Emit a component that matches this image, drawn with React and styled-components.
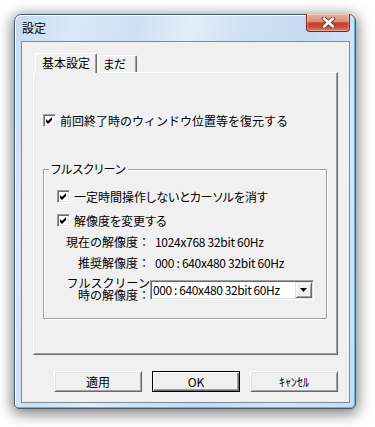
import styled, { createGlobalStyle } from "styled-components";

const GlobalStyle = createGlobalStyle`
  html, body {
    margin: 0;
    padding: 0;
    background: #fff;
  }
  body {
    font-family: "Noto Sans CJK JP", "MS UI Gothic", sans-serif;
    font-size: 12px;
    font-feature-settings: "palt";
    color: #000;
  }
`;

const Page = styled.div`
  width: 375px;
  height: 427px;
  box-sizing: border-box;
  padding: 14px 0 0 14px;
  overflow: hidden;
`;

const Window = styled.div`
  width: 342px;
  height: 395px;
  box-sizing: border-box;
  display: flex;
  flex-direction: column;
  border: 1px solid #4a5868;
  border-radius: 7px 7px 5px 5px;
  background: linear-gradient(105deg, #c6dbf0 0%, #d8e8f8 14%, #cde0f4 28%, #e2eefa 40%, #cfe1f4 52%, #c5daef 66%, #d7e6f6 82%, #c9ddf1 100%);
  box-shadow:
    inset 1px 1px 0 rgba(255, 255, 255, 0.85),
    inset -1px -1px 0 #5fb6ec,
    0 3px 14px 2px rgba(0, 0, 0, 0.5);
`;

const TitleBar = styled.div`
  height: 26px;
  flex: none;
  display: flex;
  justify-content: space-between;
  align-items: flex-start;
`;

const Title = styled.div`
  padding: 6px 0 0 7px;
  line-height: 14px;
  font-size: 12px;
`;

const CloseButton = styled.div`
  width: 44px;
  height: 18px;
  box-sizing: border-box;
  margin: -1px 5px 0 0;
  display: flex;
  align-items: center;
  justify-content: center;
  border: 1px solid #6e2a1e;
  border-top: none;
  border-radius: 0 0 4px 4px;
  background: linear-gradient(to bottom, #eab0a2 0%, #dc8c78 45%, #c2402a 52%, #c54a33 75%, #de8466 100%);
  box-shadow: inset 0 0 0 1px rgba(255, 255, 255, 0.35);
`;

const Client = styled.div`
  flex: 1;
  margin: 0 5px 5px 6px;
  border: 1px solid #7d8b99;
  background: #f0f0f0;
  display: flex;
  flex-direction: column;
  padding: 11px 11px 10px 11px;
`;

const TabStrip = styled.div`
  height: 19px;
  display: flex;
  align-items: flex-end;
  padding-left: 2px;
`;

const Tab = styled.div`
  position: relative;
  z-index: 1;
  box-sizing: border-box;
  width: ${(p) => (p.$active ? "62px" : "40px")};
  height: ${(p) => (p.$active ? "20px" : "17px")};
  margin-bottom: ${(p) => (p.$active ? "-1px" : "0")};
  padding-top: ${(p) => (p.$active ? "2px" : "1px")};
  padding-left: ${(p) => (p.$active ? "6px" : "5px")};
  line-height: 14px;
  background: #f0f0f0;
  border-top: 1px solid #fff;
  border-left: 1px solid #fff;
  border-right: 1px solid #696969;
  border-radius: 2px 2px 0 0;
  box-shadow: inset -1px 0 0 #a0a0a0;
`;

const Panel = styled.div`
  height: 283px;
  box-sizing: border-box;
  border: 1px solid;
  border-color: #fff #696969 #696969 #fff;
  box-shadow: inset -1px -1px 0 #a0a0a0;
  padding: 41px 10px 0 9px;
  display: flex;
  flex-direction: column;
`;

const CheckRow = styled.label`
  display: flex;
  align-items: center;
  gap: 4px;
  height: 13px;
  line-height: 13px;
  margin-top: ${(p) => p.$top || 0}px;
  margin-left: ${(p) => p.$indent || 0}px;
  font-feature-settings: ${(p) => (p.$wide ? "normal" : "\"palt\"")};
`;

const CheckBox = styled.span`
  width: 13px;
  height: 13px;
  box-sizing: border-box;
  flex: none;
  display: flex;
  align-items: center;
  justify-content: center;
  background: #fff;
  border: 1px solid;
  border-color: #a0a0a0 #fff #fff #a0a0a0;
  box-shadow: inset 1px 1px 0 #696969, inset -1px -1px 0 #e3e3e3;
`;

const GroupBox = styled.div`
  margin-top: 42px;
  border: 1px solid #a0a0a0;
  box-shadow: inset 1px 1px 0 #fff, 1px 1px 0 #fff;
  display: flex;
  flex-direction: column;
  padding-bottom: 18px;
`;

const GroupTitle = styled.div`
  align-self: flex-start;
  margin: -8px 0 0 5px;
  padding: 0 2px;
  line-height: 14px;
  background: #f0f0f0;
`;

const InfoGrid = styled.div`
  margin: 8px 0 0 16px;
  display: grid;
  grid-template-columns: 90px 1fr;
  grid-template-rows: 14px 14px 23px;
  row-gap: 7px;
  align-items: center;
`;

const InfoLabel = styled.div`
  text-align: right;
  line-height: ${(p) => (p.$tight ? "12px" : "14px")};
  white-space: nowrap;
  font-feature-settings: normal;
`;

const InfoValue = styled.div`
  padding-left: 5px;
  line-height: 14px;
  white-space: nowrap;
  letter-spacing: -0.3px;
`;

const Combo = styled.div`
  align-self: end;
  width: 164px;
  height: 20px;
  box-sizing: border-box;
  display: flex;
  align-items: center;
  background: #fff;
  border: 1px solid;
  border-color: #a0a0a0 #fff #fff #a0a0a0;
  box-shadow: inset 1px 1px 0 #696969, inset -1px -1px 0 #e3e3e3;
  padding: 1px 1px 1px 2px;
`;

const ComboText = styled.span`
  flex: 1;
  line-height: 14px;
  white-space: nowrap;
  letter-spacing: -0.4px;
`;

const ComboArrow = styled.span`
  width: 17px;
  height: 16px;
  box-sizing: border-box;
  flex: none;
  display: flex;
  align-items: center;
  justify-content: center;
  background: #f0f0f0;
  border: 1px solid;
  border-color: #e3e3e3 #696969 #696969 #e3e3e3;
  box-shadow: inset 1px 1px 0 #fff, inset -1px -1px 0 #a0a0a0;
`;

const ButtonRow = styled.div`
  margin-top: 16px;
  display: flex;
  justify-content: flex-end;
  gap: 10px;
`;

const Button = styled.div`
  width: 88px;
  height: 21px;
  box-sizing: border-box;
  display: flex;
  align-items: center;
  justify-content: center;
  line-height: 14px;
  background: #f0f0f0;
  border: 1px solid;
  border-color: ${(p) => (p.$default ? "#000" : "#fff #696969 #696969 #fff")};
  box-shadow: ${(p) =>
    p.$default
      ? "inset 1px 1px 0 #fff, inset -1px -1px 0 #696969, inset -2px -2px 0 #a0a0a0"
      : "inset 1px 1px 0 #e3e3e3, inset -1px -1px 0 #a0a0a0"};
`;

function Check() {
  return (
    <CheckBox>
      <svg width="7" height="7" viewBox="0 0 7 7">
        <path d="M0 2 L2 4 L6 0 L6 3 L2 7 L0 5 Z" fill="#000" />
      </svg>
    </CheckBox>
  );
}

function CloseIcon() {
  return (
    <svg width="15" height="11" viewBox="0 0 15 11">
      <path d="M3 1.5 L12 9.5 M12 1.5 L3 9.5" stroke="#5a4a48" strokeWidth="4.4" strokeLinecap="round" />
      <path d="M3 1.5 L12 9.5 M12 1.5 L3 9.5" stroke="#fff" strokeWidth="2.4" strokeLinecap="round" />
    </svg>
  );
}

export default function App() {
  return (
    <Page>
      <GlobalStyle />
      <Window>
        <TitleBar>
          <Title>設定</Title>
          <CloseButton>
            <CloseIcon />
          </CloseButton>
        </TitleBar>
        <Client>
          <TabStrip>
            <Tab $active>基本設定</Tab>
            <Tab>まだ</Tab>
          </TabStrip>
          <Panel>
            <CheckRow $wide>
              <Check />
              前回終了時のウィンドウ位置等を復元する
            </CheckRow>
            <GroupBox>
              <GroupTitle>フルスクリーン</GroupTitle>
              <CheckRow $top={14} $indent={13}>
                <Check />
                一定時間操作しないとカーソルを消す
              </CheckRow>
              <CheckRow $top={11} $indent={13}>
                <Check />
                解像度を変更する
              </CheckRow>
              <InfoGrid>
                <InfoLabel>現在の解像度：</InfoLabel>
                <InfoValue>1024x768 32bit 60Hz</InfoValue>
                <InfoLabel>推奨解像度：</InfoLabel>
                <InfoValue>000 : 640x480 32bit 60Hz</InfoValue>
                <InfoLabel $tight>
                  フルスクリーン
                  <br />
                  時の解像度：
                </InfoLabel>
                <Combo>
                  <ComboText>000 : 640x480 32bit 60Hz</ComboText>
                  <ComboArrow>
                    <svg width="7" height="4" viewBox="0 0 7 4">
                      <path d="M0 0 H7 L3.5 4 Z" fill="#000" />
                    </svg>
                  </ComboArrow>
                </Combo>
              </InfoGrid>
            </GroupBox>
          </Panel>
          <ButtonRow>
            <Button>適用</Button>
            <Button $default>OK</Button>
            <Button>ｷｬﾝｾﾙ</Button>
          </ButtonRow>
        </Client>
      </Window>
    </Page>
  );
}
